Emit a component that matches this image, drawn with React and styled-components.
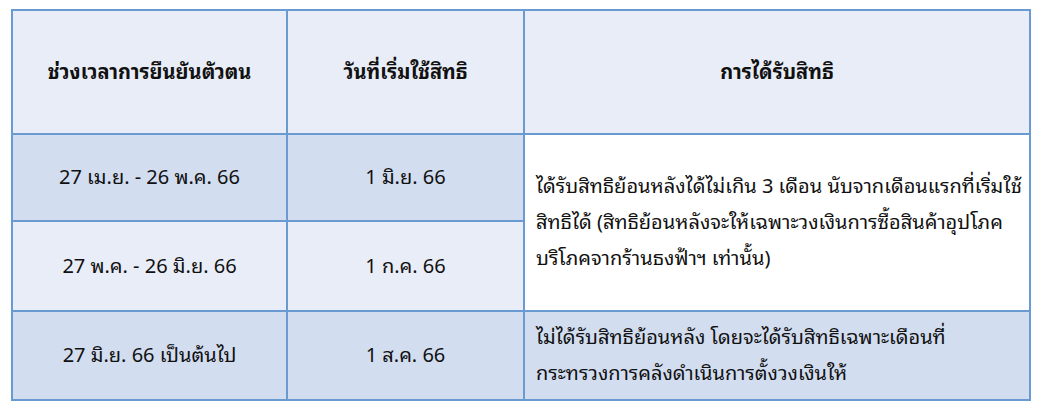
import styled, { createGlobalStyle } from "styled-components";

const GlobalStyle = createGlobalStyle`
  html, body {
    margin: 0;
    padding: 0;
    background: #ffffff;
  }
  body {
    font-family: Tahoma, "Noto Sans Thai Looped", Loma, Garuda, "Noto Sans Thai", "Noto Sans", "DejaVu Sans", sans-serif;
    color: #111111;
  }
`;

const Page = styled.div`
  padding: 9px 10px 10px 11px;
`;

const Table = styled.table`
  width: 1020px;
  border-collapse: collapse;
  border: 2px solid #6a9ad2;
  table-layout: fixed;
`;

const HeadCell = styled.th`
  height: 118px;
  background: #e9edf7;
  border: 2px solid #6a9ad2;
  font-size: 20px;
  font-weight: bold;
  text-align: center;
  vertical-align: middle;
  padding: 0 0 4px;
`;

const Cell = styled.td`
  height: ${({ $h }) => $h}px;
  background: ${({ $tone }) =>
    $tone === "dark" ? "#d2ddf0" : $tone === "white" ? "#ffffff" : "#e9edf7"};
  border: 2px solid #6a9ad2;
  font-size: 20px;
  text-align: ${({ $left }) => ($left ? "left" : "center")};
  vertical-align: middle;
  padding: ${({ $left }) => ($left ? "0 4px 6px 11px" : "0 0 5px")};
  line-height: ${({ $lh }) => $lh || 1.3};
  white-space: ${({ $left }) => ($left ? "nowrap" : "normal")};
`;

const rows = [
  { period: "27 เม.ย. - 26 พ.ค. 66", start: "1 มิ.ย. 66", tone: "dark", h: 80 },
  { period: "27 พ.ค. - 26 มิ.ย. 66", start: "1 ก.ค. 66", tone: "light", h: 83 },
];

export default function App() {
  return (
    <Page>
      <GlobalStyle />
      <Table>
        <colgroup>
          <col style={{ width: 275 }} />
          <col style={{ width: 237 }} />
          <col />
        </colgroup>
        <thead>
          <tr>
            <HeadCell>ช่วงเวลาการยืนยันตัวตน</HeadCell>
            <HeadCell>วันที่เริ่มใช้สิทธิ</HeadCell>
            <HeadCell>การได้รับสิทธิ</HeadCell>
          </tr>
        </thead>
        <tbody>
          {rows.map((r, i) => (
            <tr key={r.period}>
              <Cell $tone={r.tone} $h={r.h}>{r.period}</Cell>
              <Cell $tone={r.tone} $h={r.h}>{r.start}</Cell>
              {i === 0 && (
                <Cell $tone="white" $left $lh="36px" rowSpan={2}>
                  ได้รับสิทธิย้อนหลังได้ไม่เกิน 3 เดือน นับจากเดือนแรกที่เริ่มใช้
                  <br />
                  สิทธิได้ (สิทธิย้อนหลังจะให้เฉพาะวงเงินการซื้อสินค้าอุปโภค
                  <br />
                  บริโภคจากร้านธงฟ้าฯ เท่านั้น)
                </Cell>
              )}
            </tr>
          ))}
          <tr>
            <Cell $tone="dark" $h={82}>27 มิ.ย. 66 เป็นต้นไป</Cell>
            <Cell $tone="dark" $h={82}>1 ส.ค. 66</Cell>
            <Cell $tone="dark" $left $lh="36px">
              ไม่ได้รับสิทธิย้อนหลัง โดยจะได้รับสิทธิเฉพาะเดือนที่
              <br />
              กระทรวงการคลังดำเนินการตั้งวงเงินให้
            </Cell>
          </tr>
        </tbody>
      </Table>
    </Page>
  );
}
